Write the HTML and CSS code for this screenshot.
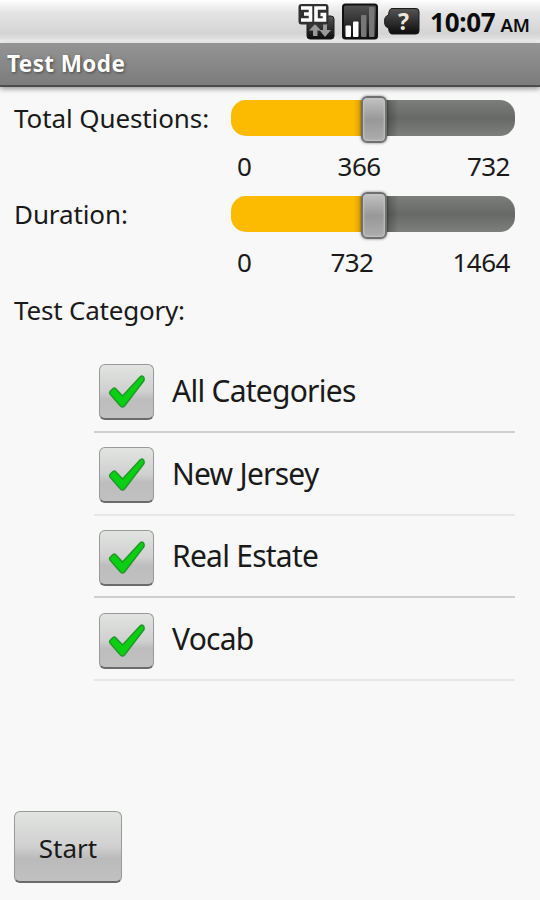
FILE: index.html
```html
<!DOCTYPE html>
<html lang="en">
<head>
    <meta charset="UTF-8">
    <meta name="viewport" content="width=device-width, initial-scale=1.0">
    <title>Test Mode</title>
    <link rel="stylesheet" href="styles.css">
</head>
<body>
    <svg class="defs" width="0" height="0">
        <defs>
            <linearGradient id="dark" x1="0" y1="0" x2="0" y2="1">
                <stop offset="0" stop-color="#555"/>
                <stop offset="1" stop-color="#0c0c0c"/>
            </linearGradient>
        </defs>
        <symbol id="check" viewBox="0 0 54 54">
            <path d="M10 26.500 L13 23.500 Q14.500 22.500 16 24 L22.500 31 L40.500 11.500 Q42 10.500 43.500 12 Q44.500 13.500 44 15.500 L24.500 41 Q22.500 43 20.500 41 L10 29 Q9 27.500 10 26.500 Z" fill="#09d012" stroke="#23982a" stroke-width="1.500" stroke-linejoin="round"/>
        </symbol>
    </svg>

    <header class="status-bar">
        <svg class="status-icon" width="38" height="40" viewBox="0 0 38 40">
            <rect x="9" y="16" width="27" height="23" rx="3" fill="url(#dark)" stroke="#1c1c1c"/>
            <path d="M17 24 L23 30.500 H19.500 V36 H15 V30.500 H11 Z" fill="#999"/>
            <path d="M25 24 H29 V30 H33 L27 37 L21.500 30 H25 Z" fill="#999"/>
            <rect x="0.500" y="4" width="30" height="20.500" rx="3" fill="#303030"/>
            <path d="M3 8 H12.500 V20 H3 M6 14 H12 M28 8 H18 V20 H26.500 V14.500 H22.500" fill="none" stroke="#fff" stroke-width="3.600"/>
        </svg>
        <svg class="status-icon" width="36" height="40" viewBox="0 0 36 40">
            <rect x="1" y="4.500" width="34" height="34" rx="2.500" fill="url(#dark)" stroke="#111" stroke-width="2"/>
            <rect x="3.500" y="25.500" width="5.500" height="11.500" rx="1" fill="#fff"/>
            <rect x="11" y="21.500" width="5.500" height="15.500" rx="1" fill="#fff"/>
            <rect x="19" y="15" width="5.500" height="22" rx="1" fill="#777"/>
            <rect x="27" y="7" width="5.500" height="30" rx="1" fill="#777"/>
        </svg>
        <svg class="status-icon battery" width="36" height="40" viewBox="0 0 36 40">
            <path d="M8 8.500 H32 Q35 8.500 35 11.500 V31 Q35 34 32 34 H8 Q5 34 4.500 28 Q0.500 27 0.500 21.500 Q0.500 16 4.500 15 Q5 8.500 8 8.500 Z" fill="url(#dark)" stroke="#1d1d1d"/>
            <text class="battery-mark" x="19.500" y="30" text-anchor="middle">?</text>
        </svg>
        <span class="clock">10:07</span>
        <span class="meridiem">AM</span>
    </header>

    <h1 class="title-bar">Test Mode</h1>

    <main class="content">
        <section class="setting">
            <div class="setting-label">Total Questions:</div>
            <div class="setting-control">
                <div class="slider"><span class="slider-thumb"></span></div>
                <div class="scale"><span>0</span><span>366</span><span>732</span></div>
            </div>
        </section>
        <section class="setting">
            <div class="setting-label">Duration:</div>
            <div class="setting-control">
                <div class="slider"><span class="slider-thumb"></span></div>
                <div class="scale"><span>0</span><span>732</span><span>1464</span></div>
            </div>
        </section>

        <div class="category-heading">Test Category:</div>
        <ul class="categories">
            <li class="category dark-line">
                <span class="checkbox"><svg width="54" height="54"><use href="#check"/></svg></span>
                <span>All Categories</span>
            </li>
            <li class="category">
                <span class="checkbox"><svg width="54" height="54"><use href="#check"/></svg></span>
                <span>New Jersey</span>
            </li>
            <li class="category dark-line">
                <span class="checkbox"><svg width="54" height="54"><use href="#check"/></svg></span>
                <span>Real Estate</span>
            </li>
            <li class="category">
                <span class="checkbox"><svg width="54" height="54"><use href="#check"/></svg></span>
                <span>Vocab</span>
            </li>
        </ul>

        <button class="start-button" type="button">Start</button>
    </main>
</body>
</html>
```

FILE: styles.css
```css
* {
    margin: 0;
    padding: 0;
    box-sizing: border-box;
}

body {
    height: 900px;
    display: flex;
    flex-direction: column;
    background: #f8f8f8;
    color: #1a1a1a;
    font-family: "Noto Sans", "Open Sans", sans-serif;
    overflow: hidden;
}

.defs {
    position: absolute;
}

.status-bar {
    height: 43px;
    display: flex;
    align-items: flex-start;
    justify-content: flex-end;
    padding-right: 10px;
    background: linear-gradient(#fff 0%, #f4f4f4 12%, #e4e4e4 30%, #d4d4d4 78%, #dedede 88%, #f4f4f4 100%);
    color: #0c0c0c;
    line-height: 45px;
}

.status-icon {
    margin-right: 6px;
}

.battery {
    margin-right: 10px;
}

.battery-mark {
    font-size: 23px;
    font-weight: 700;
    fill: #eee8dc;
}

.clock {
    font-size: 26px;
    font-weight: 700;
    letter-spacing: -0.3px;
    margin-right: 5px;
}

.meridiem {
    font-size: 18.5px;
    font-weight: 600;
    line-height: 50px;
}

.title-bar {
    height: 44px;
    padding-left: 7px;
    background: linear-gradient(#949494, #7c7c7c);
    border-bottom: 2px solid #4c4c4c;
    box-shadow: 0 2px 5px rgba(0, 0, 0, 0.4);
    color: #fff;
    font-size: 22.5px;
    font-weight: 700;
    letter-spacing: 0.4px;
    line-height: 41px;
    text-shadow: 1px 1px 3px #444;
}

.content {
    flex: 1;
    display: flex;
    flex-direction: column;
    align-items: flex-start;
    padding: 13px 25px 17px 14px;
    font-size: 26px;
    letter-spacing: -0.1px;
}

.setting {
    display: flex;
    width: 100%;
    height: 96px;
}

.setting-label {
    width: 217px;
    line-height: 36px;
}

.setting-control {
    flex: 1;
}

.slider {
    display: flex;
    align-items: center;
    justify-content: center;
    height: 36px;
    border-radius: 15px;
    background:
        linear-gradient(90deg, transparent 43%, rgba(90, 70, 0, 0.3) 47%, rgba(0, 0, 0, 0.35) 53%, transparent 59%),
        linear-gradient(90deg, #fdbb00 50%, transparent 50%),
        linear-gradient(#7b7e7b, #666966 50%, #7c7f7c);
}

.slider-thumb {
    width: 26px;
    height: 47px;
    flex: none;
    margin: 2px 0 0 2px;
    border: 2px solid #707070;
    border-radius: 6px;
    background: linear-gradient(#c2c2c2, #989898 50%, #adadad);
    box-shadow: inset 0 0 2px 1px #c4c4c4, 0 0 3px rgba(0, 0, 0, 0.5);
}

.scale {
    display: flex;
    justify-content: space-between;
    padding: 12px 5px 0 6px;
    line-height: 36px;
    letter-spacing: -0.5px;
}

.category-heading {
    height: 58px;
    line-height: 37px;
    letter-spacing: -0.2px;
}

.categories {
    width: 421px;
    margin-left: 80px;
    list-style: none;
    font-size: 30px;
    letter-spacing: -0.75px;
}

.category {
    display: flex;
    align-items: center;
    height: 82.75px;
    padding-left: 5px;
    border-bottom: 2px solid #e7e7e7;
}

.dark-line {
    border-bottom-color: #cfcfcf;
}

.checkbox {
    width: 55px;
    height: 56px;
    margin: 4px 18px 0 0;
    border: 1.5px solid #999;
    border-bottom: 2px solid #6b6b6b;
    border-radius: 6px;
    background: linear-gradient(#e2e4e2, #cfd0cf 50%, #bcbdbc 65%, #c0c1c0);
}

.checkbox svg {
    display: block;
}

.start-button {
    width: 108px;
    height: 72px;
    margin-top: auto;
    padding-top: 2px;
    border: 1.5px solid #999;
    border-bottom: 2px solid #6b6b6b;
    border-radius: 6px;
    background: linear-gradient(#e2e4e2, #cfd0cf 50%, #b9bab9 68%, #c0c1c0);
    color: #1a1a1a;
    font: 26px "Noto Sans", "Open Sans", sans-serif;
}
```
